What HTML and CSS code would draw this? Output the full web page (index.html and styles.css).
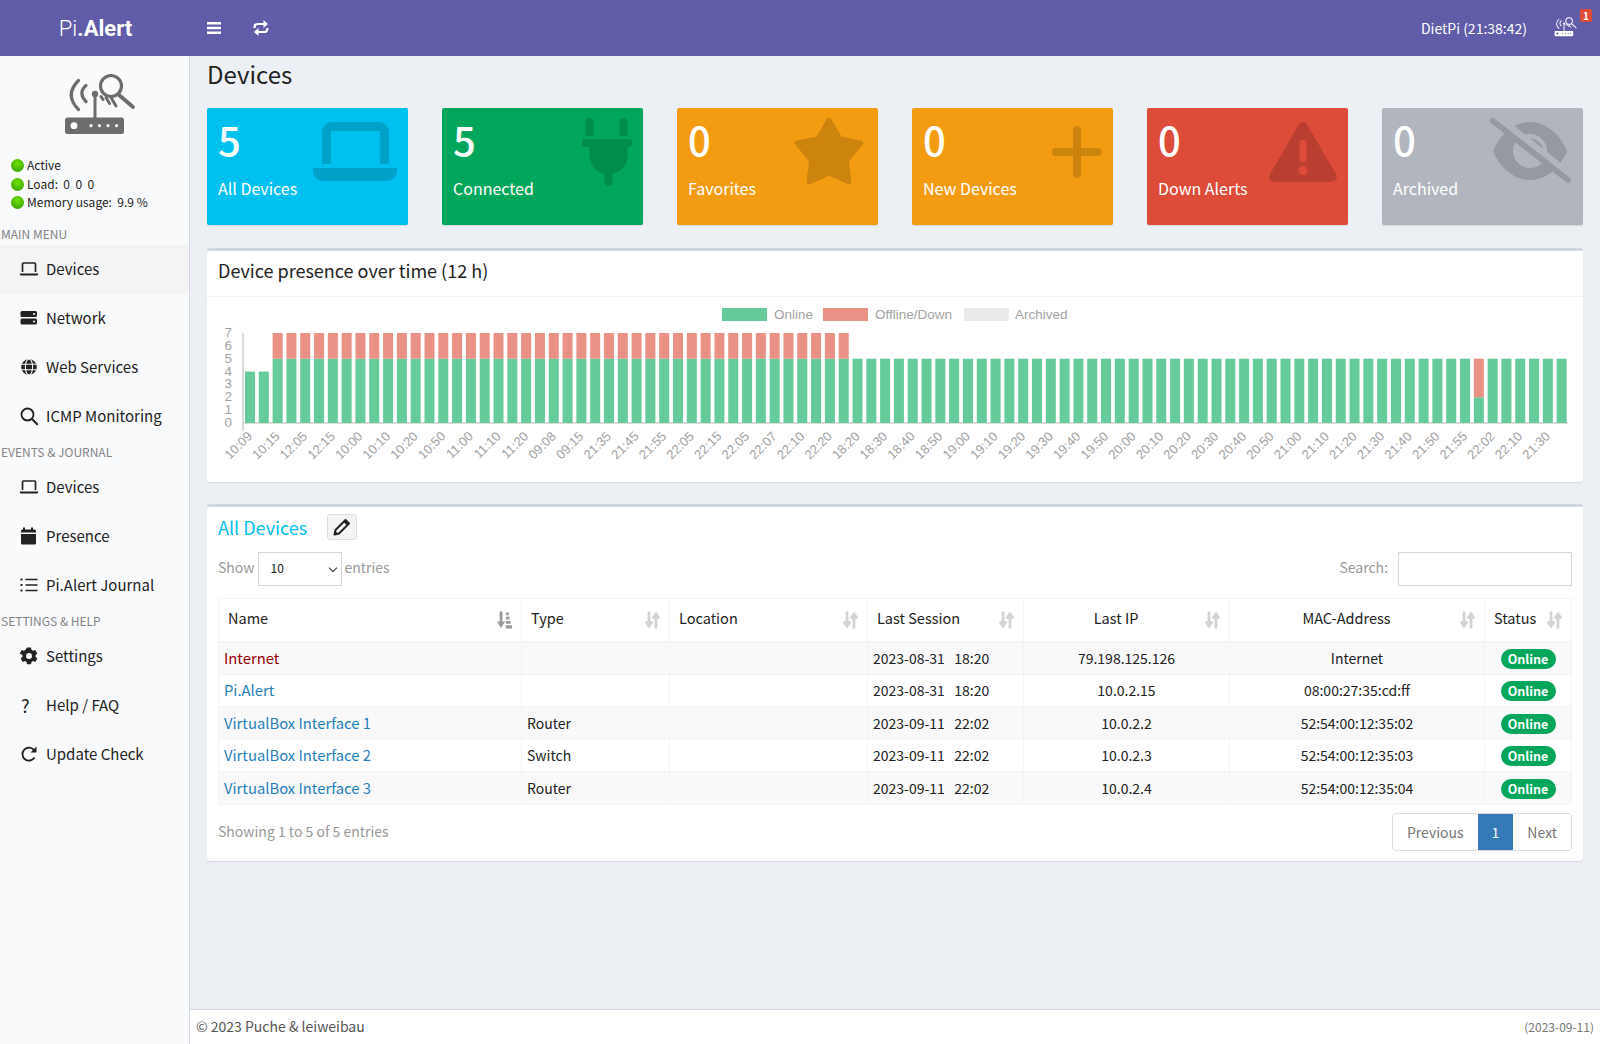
FILE: index.html
```html
<!DOCTYPE html>
<html lang="en">
<head>
  <meta charset="UTF-8" />
  <meta name="viewport" content="width=device-width, initial-scale=1.0"/>
  <title>Pi.Alert - Devices</title>
  <link rel="stylesheet" href="styles.css">
</head>
<body>

  <svg class="icon-defs" aria-hidden="true">
    <symbol id="router" viewBox="60 72 76 66">
      <rect x="65" y="117.5" width="59" height="16.5" rx="2.5" fill="currentColor"/>
      <circle cx="74" cy="125.7" r="3.4" fill="var(--router-hole)"/>
      <circle cx="91" cy="125.7" r="1.6" fill="var(--router-hole)"/>
      <circle cx="99.5" cy="125.7" r="1.6" fill="var(--router-hole)"/>
      <circle cx="108" cy="125.7" r="1.6" fill="var(--router-hole)"/>
      <circle cx="116.5" cy="125.7" r="1.6" fill="var(--router-hole)"/>
      <g fill="none" stroke="currentColor" stroke-linecap="round">
        <path d="M95 118V95" stroke-width="3"/>
        <path d="M78.5 80.5C69 90 69 100 78.5 109.5" stroke-width="3.2"/>
        <path d="M86 85.500C80.500 90 80.500 96 86 101.500" stroke-width="3.2"/>
        <path d="M101 96.500L103 99.500M106 97.500L109.500 103.500M111 97.500L116 106" stroke-width="3"/>
        <circle cx="111" cy="86" r="10.5" stroke-width="3.2"/>
        <path d="M119 95L133 107" stroke-width="3.8"/>
      </g>
      <circle cx="95" cy="94" r="3.2" fill="currentColor"/>
    </symbol>
    <symbol id="i-laptop" viewBox="0 0 20 20">
      <path d="M3.5 13V5a1 1 0 0 1 1-1h11a1 1 0 0 1 1 1v8" fill="none" stroke="currentColor" stroke-width="1.7"/>
      <path d="M.8 14.500h18.400v.6a1.500 1.500 0 0 1-1.500 1.500H2.300a1.500 1.500 0 0 1-1.500-1.500z" fill="currentColor"/>
    </symbol>
    <symbol id="i-server" viewBox="0 0 20 20">
      <path fill-rule="evenodd" d="M3 3h13.500a1.500 1.500 0 0 1 1.500 1.500v3a1.500 1.500 0 0 1-1.500 1.500H3a1.500 1.500 0 0 1-1.500-1.500v-3A1.500 1.500 0 0 1 3 3zm11 2.300v1.400h2.200V5.300zM3 10.500h13.500a1.500 1.500 0 0 1 1.500 1.500v3a1.500 1.500 0 0 1-1.500 1.500H3A1.500 1.500 0 0 1 1.500 15v-3A1.500 1.500 0 0 1 3 10.500zm11 2.300v1.400h2.200v-1.400z" fill="currentColor"/>
    </symbol>
    <symbol id="i-globe" viewBox="0 0 20 20">
      <circle cx="10" cy="10" r="7.8" fill="currentColor"/>
      <g fill="none" stroke="#f9fafc" stroke-width="1.1">
        <ellipse cx="10" cy="10" rx="3.6" ry="8"/>
        <path d="M2.200 7.200h15.600M2.200 12.800h15.600"/>
      </g>
    </symbol>
    <symbol id="i-search" viewBox="0 0 20 20">
      <circle cx="8.500" cy="8.500" r="6" fill="none" stroke="currentColor" stroke-width="1.8"/>
      <path d="M13 13l5.200 5.200" stroke="currentColor" stroke-width="2" stroke-linecap="round"/>
    </symbol>
    <symbol id="i-calendar" viewBox="0 0 20 20">
      <path d="M5 1.500h2v2h6v-2h2v2h1.500A1.500 1.500 0 0 1 18 5v1.500H3V5a1.500 1.500 0 0 1 1.500-1.500H5zM3 8h15v9a1.500 1.500 0 0 1-1.500 1.500h-12A1.500 1.500 0 0 1 3 17z" fill="currentColor" transform="translate(-1)"/>
    </symbol>
    <symbol id="i-list" viewBox="0 0 20 20">
      <path d="M6.500 4.500h12M6.500 10h12M6.500 15.500h12" stroke="currentColor" stroke-width="1.6"/>
      <path d="M1.500 3.500h2v2h-2zM1.500 9h2v2h-2zM1.500 14.500h2v2h-2z" fill="currentColor"/>
    </symbol>
    <symbol id="i-cog" viewBox="0 0 20 20">
      <path fill-rule="evenodd" d="M8 1.500h4l.5 2.300 1.500.9 2.300-.8 2 3.500-1.800 1.600v1.800l1.800 1.600-2 3.500-2.300-.8-1.500.9-.5 2.300H8l-.5-2.300-1.500-.9-2.300.8-2-3.500 1.800-1.600V9L.7 7.400l2-3.500 2.300.8 1.500-.9zM10 7a3 3 0 1 0 0 6 3 3 0 0 0 0-6z" fill="currentColor"/>
    </symbol>
    <symbol id="i-redo" viewBox="0 0 20 20">
      <path d="M15.500 13.500A6.500 6.500 0 1 1 15 6" fill="none" stroke="currentColor" stroke-width="1.9"/>
      <path d="M17.500 2.500v6h-6z" fill="currentColor"/>
    </symbol>
    <symbol id="i-sort" viewBox="0 0 16 18">
      <path d="M4.300 0v14M.8 10.500l3.500 5 3.500-5M11.700 18V4M8.200 7.500l3.500-5 3.500 5" fill="none" stroke="currentColor" stroke-width="3"/>
    </symbol>
    <symbol id="i-sort-active" viewBox="0 0 16 18">
      <path d="M4.300 0v13" stroke="currentColor" stroke-width="3"/>
      <path d="M0 10.500h8.600l-4.300 7zM9.500 1h3v3h-3zM9.500 5.500h4v3h-4zM9.500 10h5v3h-5zM9.500 14.500h6.500V18H9.500z" fill="currentColor"/>
    </symbol>
  </svg>

  <header class="top-bar">
    <div class="brand"><span class="brand-thin">Pi</span><b>.Alert</b></div>
    <button class="top-btn top-btn-menu" aria-label="Toggle menu">
      <svg viewBox="0 0 14 12" width="14" height="12"><path d="M0 1.300h14M0 6h14M0 10.700h14" stroke="currentColor" stroke-width="2.4"/></svg>
    </button>
    <button class="top-btn" aria-label="Reload">
      <svg viewBox="0 0 16 16" width="16" height="16">
        <path d="M1.600 8V7a3 3 0 0 1 3-3H12M14.400 8v1a3 3 0 0 1-3 3H4" fill="none" stroke="currentColor" stroke-width="2.2"/>
        <path d="M10.500 0l4.500 4-4.500 4zM5.500 8L1 12l4.500 4z" fill="currentColor"/>
      </svg>
    </button>
    <span class="host">DietPi (21:38:42)</span>
    <div class="alert-icon">
      <svg class="alert-router"><use href="#router"/></svg>
      <span class="alert-badge">1</span>
    </div>
  </header>

  <div class="page">
    <aside class="sidebar">
      <svg class="side-logo"><use href="#router"/></svg>
      <div class="status-list">
        <div class="status-line"><i class="dot"></i>Active</div>
        <div class="status-line"><i class="dot"></i>Load:&nbsp; 0&nbsp; 0&nbsp; 0</div>
        <div class="status-line"><i class="dot"></i>Memory usage:&nbsp; 9.9 %</div>
      </div>

      <div class="menu-head">Main Menu</div>
      <a class="menu-item active"><svg><use href="#i-laptop"/></svg>Devices</a>
      <a class="menu-item"><svg><use href="#i-server"/></svg>Network</a>
      <a class="menu-item"><svg><use href="#i-globe"/></svg>Web Services</a>
      <a class="menu-item"><svg><use href="#i-search"/></svg>ICMP Monitoring</a>

      <div class="menu-head">Events &amp; Journal</div>
      <a class="menu-item"><svg><use href="#i-laptop"/></svg>Devices</a>
      <a class="menu-item"><svg><use href="#i-calendar"/></svg>Presence</a>
      <a class="menu-item"><svg><use href="#i-list"/></svg>Pi.Alert Journal</a>

      <div class="menu-head">Settings &amp; Help</div>
      <a class="menu-item"><svg><use href="#i-cog"/></svg>Settings</a>
      <a class="menu-item"><span class="menu-glyph">?</span>Help / FAQ</a>
      <a class="menu-item"><svg><use href="#i-redo"/></svg>Update Check</a>
    </aside>

    <div class="main">
      <main class="content">
        <h1 class="page-title">Devices</h1>

        <div class="cards">
          <div class="card card-blue">
            <div class="card-num">5</div>
            <div class="card-label">All Devices</div>
            <svg class="card-icon icon-laptop" viewBox="0 0 84 59" width="84" height="59">
              <path d="M13.500 42V10A5.500 5.500 0 0 1 19 4.500H66A5.500 5.500 0 0 1 71.500 10V42" fill="none" stroke="currentColor" stroke-width="9"/>
              <path d="M0 46h84v3a10 10 0 0 1-10 10H10A10 10 0 0 1 0 49z" fill="currentColor"/>
            </svg>
          </div>
          <div class="card card-green">
            <div class="card-num">5</div>
            <div class="card-label">Connected</div>
            <svg class="card-icon icon-plug" viewBox="0 0 50 68" width="50" height="68">
              <path d="M8 0a4 4 0 0 1 4 4v14H4V4a4 4 0 0 1 4-4zM42 0a4 4 0 0 1 4 4v14h-8V4a4 4 0 0 1 4-4zM3 21h44a3.500 3.500 0 0 1 0 8h-1v8c0 10-6 17-15 19v8a4 4 0 0 1-8 0v-8C14 54 8 47 8 37v-8H3a3.500 3.500 0 0 1 0-8z" fill="currentColor" transform="translate(-.5)"/>
            </svg>
          </div>
          <div class="card card-orange">
            <div class="card-num">0</div>
            <div class="card-label">Favorites</div>
            <svg class="card-icon icon-star" viewBox="0 0 70 68" width="70" height="68">
              <path d="M35 3L46 22L67 26L52.500 43.500L55 65L35 56L15 65L17.500 43.500L3 26L24 22z" fill="currentColor" stroke="currentColor" stroke-width="5" stroke-linejoin="round"/>
            </svg>
          </div>
          <div class="card card-orange">
            <div class="card-num">0</div>
            <div class="card-label">New Devices</div>
            <svg class="card-icon icon-plus" viewBox="0 0 50 52" width="50" height="52">
              <path d="M25 4v44M4 26h42" stroke="currentColor" stroke-width="8" stroke-linecap="round"/>
            </svg>
          </div>
          <div class="card card-red">
            <div class="card-num">0</div>
            <div class="card-label">Down Alerts</div>
            <svg class="card-icon icon-warn" viewBox="0 0 68 60" width="68" height="60">
              <path fill-rule="evenodd" d="M34 0c2 0 3.500 1 4.500 3L67 52c2 4 0 8-5 8H6c-5 0-7-4-5-8L29.500 3c1-2 2.500-3 4.500-3zm0 18a3.500 3.500 0 0 0-3.500 3.500v15a3.500 3.500 0 0 0 7 0v-15A3.500 3.500 0 0 0 34 18zm0 26a4.500 4.500 0 1 0 0 9 4.500 4.500 0 0 0 0-9z" fill="currentColor"/>
            </svg>
          </div>
          <div class="card card-gray">
            <div class="card-num">0</div>
            <div class="card-label">Archived</div>
            <svg class="card-icon icon-eye" viewBox="0 0 84 68" width="84" height="68">
              <mask id="eye-cut">
                <rect width="84" height="68" fill="#fff"/>
                <path d="M0 -7L84 60" stroke="#000" stroke-width="8"/>
              </mask>
              <g mask="url(#eye-cut)" fill="currentColor">
                <path fill-rule="evenodd" d="M5 34C12 17 26 5 42 5s30 12 37 29c-7 17-21 29-37 29S12 51 5 34zm37-17a17 17 0 1 0 0 34 17 17 0 0 0 0-34z"/>
                <path d="M42 25a10 10 0 0 1 10 10" fill="none" stroke="currentColor" stroke-width="7"/>
              </g>
              <path d="M5 4l75 59" stroke="currentColor" stroke-width="6" stroke-linecap="round"/>
            </svg>
          </div>
        </div>

        <section class="box box-chart">
          <div class="box-head"><h3 class="box-title">Device presence over time (12 h)</h3></div>
          <svg id="presence-chart" class="chart" viewBox="0 0 1376 184" width="1376" height="184"></svg>
        </section>

        <section class="box box-table">
          <div class="table-title-row">
            <h3 class="table-title">All Devices</h3>
            <button class="edit-btn" aria-label="Edit">
              <svg viewBox="0 0 18 18" width="18" height="18">
                <path d="M12.500 2L16 5.500 6 15.500l-4.500 1 1-4.500z" fill="#fff" stroke="currentColor" stroke-width="2" stroke-linejoin="round"/>
                <path d="M12.500 2L16 5.500l-2 2L10.500 4zM1.500 16.500l1-3.500 2.500 2.500z" fill="currentColor"/>
              </svg>
            </button>
          </div>

          <div class="table-tools">
            <div class="tool-label">Show
              <span class="select-wrap"><select class="page-size"><option>10</option></select></span>
              entries</div>
            <label class="tool-label tool-search">Search: <input type="text" class="search-input"></label>
          </div>

          <table class="devices">
            <colgroup>
              <col class="c-name"><col class="c-type"><col class="c-loc"><col class="c-session"><col class="c-ip"><col class="c-mac"><col class="c-status">
            </colgroup>
            <thead>
              <tr>
                <th>Name<svg class="sort sort-on"><use href="#i-sort-active"/></svg></th>
                <th>Type<svg class="sort"><use href="#i-sort"/></svg></th>
                <th>Location<svg class="sort"><use href="#i-sort"/></svg></th>
                <th>Last Session<svg class="sort"><use href="#i-sort"/></svg></th>
                <th class="center">Last IP<svg class="sort"><use href="#i-sort"/></svg></th>
                <th class="center">MAC-Address<svg class="sort"><use href="#i-sort"/></svg></th>
                <th>Status<svg class="sort"><use href="#i-sort"/></svg></th>
              </tr>
            </thead>
            <tbody>
              <tr><td><a class="link-down">Internet</a></td><td></td><td></td><td>2023-08-31&nbsp;&nbsp; 18:20</td><td class="center">79.198.125.126</td><td class="center">Internet</td><td class="center"><span class="pill">Online</span></td></tr>
              <tr><td><a>Pi.Alert</a></td><td></td><td></td><td>2023-08-31&nbsp;&nbsp; 18:20</td><td class="center">10.0.2.15</td><td class="center">08:00:27:35:cd:ff</td><td class="center"><span class="pill">Online</span></td></tr>
              <tr><td><a>VirtualBox Interface 1</a></td><td>Router</td><td></td><td>2023-09-11&nbsp;&nbsp; 22:02</td><td class="center">10.0.2.2</td><td class="center">52:54:00:12:35:02</td><td class="center"><span class="pill">Online</span></td></tr>
              <tr><td><a>VirtualBox Interface 2</a></td><td>Switch</td><td></td><td>2023-09-11&nbsp;&nbsp; 22:02</td><td class="center">10.0.2.3</td><td class="center">52:54:00:12:35:03</td><td class="center"><span class="pill">Online</span></td></tr>
              <tr><td><a>VirtualBox Interface 3</a></td><td>Router</td><td></td><td>2023-09-11&nbsp;&nbsp; 22:02</td><td class="center">10.0.2.4</td><td class="center">52:54:00:12:35:04</td><td class="center"><span class="pill">Online</span></td></tr>
            </tbody>
          </table>

          <div class="table-foot">
            <span class="table-info">Showing 1 to 5 of 5 entries</span>
            <div class="pager">
              <a class="pager-btn">Previous</a>
              <a class="pager-btn current">1</a>
              <a class="pager-btn">Next</a>
            </div>
          </div>
        </section>
      </main>

      <footer class="footer">
        <span class="footer-copy">&copy; 2023 Puche &amp; leiweibau</span>
        <span class="footer-date">(2023-09-11)</span>
      </footer>
    </div>
  </div>

  <script>
    const labels = ["10:09","10:15","12:05","12:15","10:00","10:10","10:20","10:50","11:00","11:10","11:20","09:08","09:15","21:35","21:45","21:55","22:05","22:15","22:05","22:07","22:10","22:20","18:20","18:30","18:40","18:50","19:00","19:10","19:20","19:30","19:40","19:50","20:00","20:10","20:20","20:30","20:40","20:50","21:00","21:10","21:20","21:30","21:40","21:50","21:55","22:02","22:10","21:30"];

    // chart area, in svg coords (svg starts at x 207, y 297 of the page)
    const left = 38, step = 13.807, barW = 10, base = 126, unit = 12.86;
    const GREEN = "#66cb9b", RED = "#ea9186";

    function svgEl(name, attrs, text) {
      const el = document.createElementNS("http://www.w3.org/2000/svg", name);
      for (const k in attrs) el.setAttribute(k, attrs[k]);
      if (text !== undefined) el.textContent = text;
      return el;
    }

    function barValues(i) {
      if (i < 2) return [4, 0];
      if (i <= 43) return [5, 2];
      if (i === 89) return [2, 3];
      return [5, 0];
    }

    function drawChart() {
      const svg = document.getElementById("presence-chart");

      // legend
      [["Online", GREEN, 515, 561], ["Offline/Down", RED, 616, 662], ["Archived", "#ebebeb", 757, 802]].forEach(l => {
        svg.appendChild(svgEl("rect", { x: l[2], y: 11, width: 45, height: 13, fill: l[1] }));
        svg.appendChild(svgEl("text", { x: l[3] + 6, y: 22, class: "chart-text" }, l[0]));
      });

      // axes
      svg.appendChild(svgEl("path", { d: `M36 ${base}H1361`, stroke: "#d2d2d2", "stroke-width": 1.5 }));
      svg.appendChild(svgEl("path", { d: `M36 36V${base + 8}`, stroke: "#d2d2d2", "stroke-width": 1.5 }));

      for (let v = 0; v <= 7; v++) {
        svg.appendChild(svgEl("text", { x: 25, y: base - v * unit + 4, "text-anchor": "end", class: "chart-text" }, v));
      }

      for (let i = 0; i < 96; i++) {
        const x = left + i * step;
        const [on, off] = barValues(i);
        svg.appendChild(svgEl("rect", { x: x, y: base - on * unit, width: barW, height: on * unit, fill: GREEN }));
        if (off) svg.appendChild(svgEl("rect", { x: x, y: base - (on + off) * unit, width: barW, height: off * unit, fill: RED }));
      }

      labels.forEach((t, n) => {
        const x = left + n * 2 * step + 8, y = base + 14;
        svg.appendChild(svgEl("text", { x: x, y: y, "text-anchor": "end", transform: `rotate(-45 ${x} ${y})`, class: "chart-text chart-tick" }, t));
      });
    }

    drawChart();
  </script>
</body>
</html>
```

FILE: styles.css
```css
* {
  box-sizing: border-box;
}

body {
  font-family: "Noto Sans CJK SC", "Open Sans", sans-serif;
  font-size: 14px;
  line-height: 20px;
  margin: 0;
  padding: 0;
  background: #ecf0f5;
  color: #222;
  height: 1044px;
  overflow: hidden;
  display: flex;
  flex-direction: column;
  --router-hole: #f9fafc;
}

.icon-defs {
  display: none;
}

/* top bar */

.top-bar {
  flex: 0 0 56px;
  display: flex;
  align-items: center;
  background: #605ca8;
  color: #fff;
  --router-hole: #605ca8;
}

.brand {
  width: 189px;
  text-align: center;
  font-family: Roboto, "Liberation Sans", sans-serif;
  font-size: 22px;
  padding: 2px 0 0 2px;
}

.brand-thin {
  font-weight: 300;
}

.top-btn {
  display: flex;
  background: none;
  border: none;
  padding: 0;
  color: #fff;
  margin-left: 18px;
}

.top-btn-menu {
  margin-right: 14px;
}

.host {
  margin-left: auto;
  font-size: 14px;
  margin-right: 26px;
}

.alert-icon {
  position: relative;
  width: 47px;
  height: 24px;
}

.alert-router {
  width: 24px;
  height: 22px;
  display: block;
}

.alert-badge {
  position: absolute;
  left: 27px;
  top: -7px;
  width: 12px;
  height: 13px;
  border-radius: 2px;
  background: #dd4b39;
  color: #fff;
  font-size: 10px;
  font-weight: 700;
  line-height: 13px;
  text-align: center;
}

/* sidebar */

.page {
  flex: 1;
  display: flex;
  min-height: 0;
}

.sidebar {
  flex: 0 0 190px;
  background: #f9fafc;
  border-right: 1px solid #d2d6de;
}

.side-logo {
  display: block;
  width: 76px;
  height: 66px;
  margin: 16px 0 0 60px;
  color: #6d6d6d;
}

.status-list {
  margin: 18px 0 0 11px;
  font-size: 12px;
  line-height: 18.7px;
  height: 67px;
}

.status-line {
  display: flex;
  align-items: center;
  white-space: pre;
}

.dot {
  width: 13px;
  height: 13px;
  border-radius: 50%;
  background: radial-gradient(circle at 50% 35%, #6fe000, #2f9a00);
  margin-right: 3px;
}

.menu-head {
  height: 22px;
  line-height: 22px;
  padding-left: 1px;
  font-size: 12px;
  color: #848484;
  text-transform: uppercase;
}

.menu-item {
  display: flex;
  align-items: center;
  height: 49px;
  padding: 0 0 2px 19px;
  font-size: 15px;
  color: #222;
}

.menu-item.active {
  background: #f4f4f5;
}

.menu-item svg {
  width: 20px;
  height: 20px;
  margin-right: 7px;
}

.menu-glyph {
  width: 20px;
  margin-right: 7px;
  padding-left: 2px;
  font-size: 18px;
}

/* content */

.main {
  flex: 1;
  display: flex;
  flex-direction: column;
  min-width: 0;
}

.content {
  flex: 1;
  padding: 0 17px;
}

.page-title {
  margin: 0;
  height: 52px;
  padding-top: 1px;
  font-size: 24px;
  line-height: 34px;
  font-weight: 400;
}

/* small boxes */

.cards {
  display: grid;
  grid-template-columns: repeat(6, 201px);
  column-gap: 34px;
}

.card {
  position: relative;
  height: 117px;
  padding: 9px 11px;
  border-radius: 2px;
  color: #fff;
  box-shadow: 0 1px 1px rgba(0, 0, 0, 0.1);
}

.card-num {
  font-size: 40px;
  line-height: 44px;
  font-weight: 500;
}

.card-label {
  margin-top: 15px;
  font-size: 16px;
  line-height: 24px;
}

.card-icon {
  position: absolute;
  top: 14px;
  right: 11px;
  color: #000;
  opacity: 0.15;
}

.icon-plug {
  top: 10px;
}

.icon-star {
  top: 9px;
  right: 14px;
}

.icon-plus {
  top: 18px;
}

.icon-eye {
  top: 9px;
}

.card-blue { background: #00c0ef; }
.card-green { background: #00a65a; }
.card-orange { background: #f39c12; }
.card-red { background: #dd4b39; }
.card-gray { background: #b1b5bd; }

/* boxes */

.box {
  background: #fff;
  border-top: 3px solid #d2d6de;
  border-radius: 3px;
  box-shadow: 0 1px 1px rgba(0, 0, 0, 0.1);
}

.box-chart {
  margin-top: 23px;
  height: 234px;
}

.box-head {
  height: 46px;
  padding: 0 11px 8px;
  display: flex;
  align-items: center;
  border-bottom: 1px solid #f4f4f4;
}

.box-title {
  margin: 0;
  font-size: 18px;
  font-weight: 400;
}

.chart {
  display: block;
}

.chart-text {
  font-family: "Liberation Sans", Arial, sans-serif;
  font-size: 13.5px;
  fill: #a3a3a3;
}

.chart-tick {
  font-size: 13px;
}

/* device table */

.box-table {
  margin-top: 22px;
  height: 357px;
  padding: 0 11px;
}

.table-title-row {
  display: flex;
  align-items: center;
  height: 35px;
  padding-top: 5px;
}

.table-title {
  margin: 0;
  font-size: 18px;
  font-weight: 400;
  color: #00c0ef;
}

.edit-btn {
  display: flex;
  align-items: center;
  justify-content: center;
  width: 30px;
  height: 26px;
  margin-left: 20px;
  padding: 0;
  background: #f4f4f4;
  border: 1px solid #ddd;
  border-radius: 3px;
  color: #222;
}

.table-tools {
  display: flex;
  justify-content: space-between;
  margin-top: 10px;
  height: 46px;
}

.tool-label {
  display: flex;
  align-items: flex-start;
  gap: 3px;
  color: #999;
  line-height: 30px;
}

.tool-search {
  gap: 10px;
}

.select-wrap {
  position: relative;
  display: block;
}

.select-wrap::after {
  content: "";
  position: absolute;
  right: 6px;
  top: 13px;
  width: 5px;
  height: 5px;
  border-right: 1px solid #333;
  border-bottom: 1px solid #333;
  transform: rotate(45deg);
}

.page-size {
  display: block;
  width: 84px;
  height: 34px;
  padding: 0 12px 3px;
  appearance: none;
  background: #fff;
  border: 1px solid #d2d6de;
  border-radius: 0;
  font-family: inherit;
  font-size: 12px;
  color: #222;
}

.search-input {
  width: 174px;
  height: 34px;
  border: 1px solid #d2d6de;
}

.devices {
  width: 1353px;
  table-layout: fixed;
  border-collapse: collapse;
}

.c-name { width: 303px; }
.c-type { width: 148px; }
.c-loc { width: 198px; }
.c-session { width: 156px; }
.c-ip { width: 206px; }
.c-mac { width: 255px; }
.c-status { width: 87px; }

.devices th {
  position: relative;
  height: 43px;
  padding: 0 30px 4px 9px;
  text-align: left;
  font-weight: 400;
  font-size: 14.5px;
  border: 1px solid #f4f4f4;
  border-bottom-width: 2px;
  color: #222;
  white-space: nowrap;
}

.devices th.center {
  text-align: center;
}

.sort {
  position: absolute;
  right: 9px;
  top: 12px;
  width: 15px;
  height: 18px;
  color: #d4d4d4;
}

.sort-on {
  color: #999;
}

.devices td {
  height: 32.5px;
  padding: 0 5px;
  border: 1px solid #f4f4f4;
  white-space: nowrap;
}

.devices td.center {
  text-align: center;
}

.devices tbody tr:nth-child(odd) {
  background: #f9f9f9;
}

.devices a {
  font-size: 14.8px;
  color: #1f7fbb;
}

.devices a.link-down {
  color: #990000;
}

.pill {
  display: inline-block;
  width: 55px;
  height: 20px;
  border-radius: 10px;
  background: #00a65a;
  color: #fff;
  font-size: 12.5px;
  font-weight: 700;
  line-height: 20px;
  text-align: center;
  vertical-align: middle;
}

.table-foot {
  display: flex;
  justify-content: space-between;
  margin-top: 8px;
}

.table-info {
  color: #999;
  padding-top: 8px;
}

.pager {
  display: flex;
  height: 38px;
  border: 1px solid #ddd;
  border-radius: 4px;
  overflow: hidden;
}

.pager-btn {
  display: flex;
  align-items: center;
  padding: 0 14px;
  color: #777;
}

.pager-btn.current {
  background: #337ab7;
  color: #fff;
}

/* footer */

.footer {
  flex: 0 0 35px;
  display: flex;
  align-items: center;
  justify-content: space-between;
  padding: 0 6px;
  background: #fff;
  border-top: 1px solid #d2d6de;
  color: #555;
}

.footer-copy {
  margin-top: -2px;
}

.footer-date {
  font-size: 12px;
  color: #777;
}
```
